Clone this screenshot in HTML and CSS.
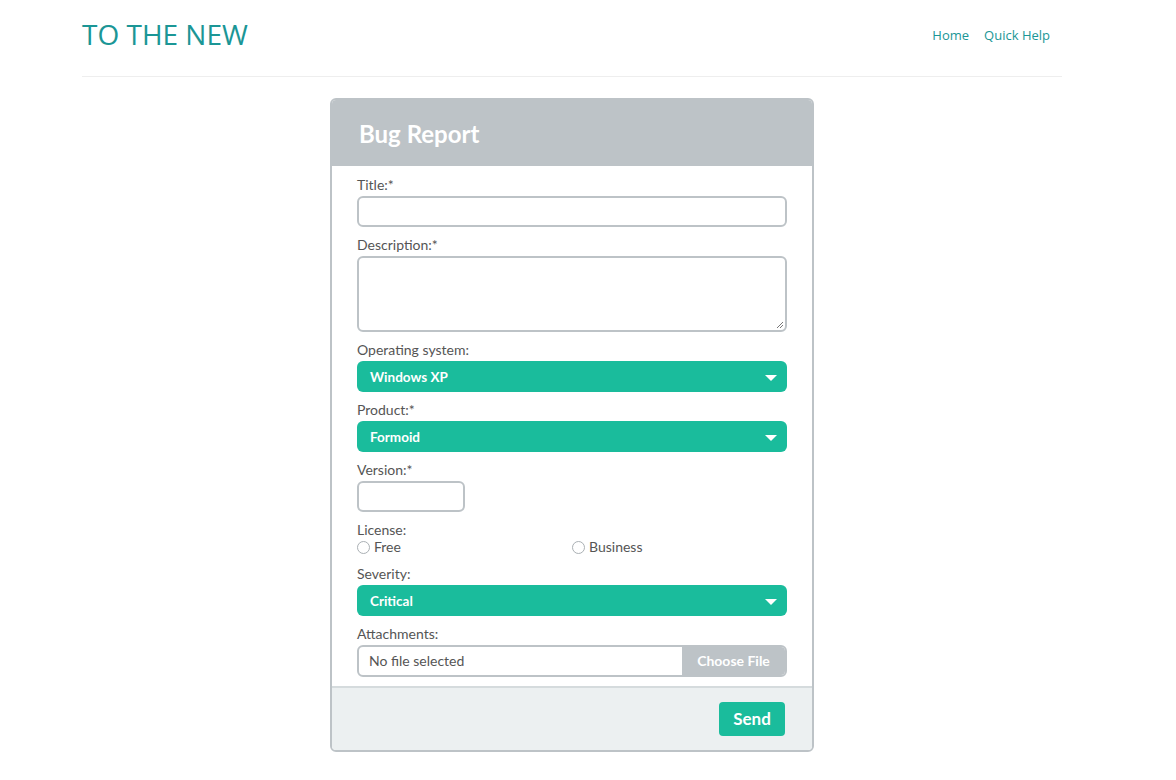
FILE: index.html
```html
<!DOCTYPE html>
<html>
<head>
<meta charset="utf-8">
<link rel="stylesheet" href="styles.css">
</head>
<body>
<div class="container">
  <header class="topbar">
    <div class="logo">TO THE NEW</div>
    <nav class="nav">
      <a href="#">Home</a>
      <a href="#">Quick Help</a>
    </nav>
  </header>
  <form class="card">
    <div class="card-head">Bug Report</div>
    <div class="card-body">
      <div class="field">
        <label>Title:*</label>
        <input class="text" type="text">
      </div>
      <div class="field">
        <label>Description:*</label>
        <div class="textarea"><svg class="grip" width="8" height="8" viewBox="0 0 8 8"><path d="M7 1L1 7M7 4L4 7" stroke="#777" stroke-width="1"/></svg></div>
      </div>
      <div class="field">
        <label>Operating system:</label>
        <div class="select">Windows XP<span class="caret"></span></div>
      </div>
      <div class="field">
        <label>Product:*</label>
        <div class="select">Formoid<span class="caret"></span></div>
      </div>
      <div class="field">
        <label>Version:*</label>
        <input class="text short" type="text">
      </div>
      <div class="field">
        <label>License:</label>
        <div class="radios">
          <span class="radio"><span class="dot"></span>Free</span>
          <span class="radio"><span class="dot"></span>Business</span>
        </div>
      </div>
      <div class="field">
        <label>Severity:</label>
        <div class="select">Critical<span class="caret"></span></div>
      </div>
      <div class="field last">
        <label>Attachments:</label>
        <div class="file">
          <span class="file-name">No file selected</span>
          <span class="file-btn">Choose File</span>
        </div>
      </div>
    </div>
    <div class="card-foot">
      <span class="send">Send</span>
    </div>
  </form>
</div>
</body>
</html>
```
FILE: styles.css
```css
* { box-sizing: border-box; }
body {
  margin: 0;
  background: #fff;
  font-family: Lato, "Open Sans", sans-serif;
}
.container {
  width: 980px;
  margin-left: 82px;
}
.topbar {
  display: flex;
  justify-content: space-between;
  align-items: flex-start;
  height: 77px;
  border-bottom: 1px solid #eeeeee;
}
.logo {
  font-family: "Open Sans", sans-serif;
  font-size: 28px;
  color: #1b9696;
  margin-top: 15px;
}
.nav {
  display: flex;
  gap: 15px;
  margin-top: 26px;
  margin-right: 12px;
}
.nav a {
  font-family: "Open Sans", sans-serif;
  font-size: 13px;
  color: #1b9696;
  text-decoration: none;
}
.card {
  display: block;
  width: 484px;
  margin: 21px auto 0;
  border: 2px solid #bdc3c7;
  border-radius: 6px;
  overflow: hidden;
}
.card-head {
  background: #bdc3c7;
  color: #fff;
  font-weight: 700;
  font-size: 24px;
  height: 68px;
  line-height: 72px;
  padding-left: 27px;
  margin-top: -2px;
}
.card-body {
  padding: 10px 25px 9px;
}
.field { margin-bottom: 9px; }
.field.last { margin-bottom: 0; }
label {
  display: block;
  font-size: 14px;
  line-height: 17px;
  color: #555;
  margin-bottom: 3px;
}
.text {
  display: block;
  width: 430px;
  height: 31px;
  border: 2px solid #bdc3c7;
  border-radius: 6px;
  background: #fff;
  margin: 0;
  outline: none;
}
.text.short { width: 108px; }
.textarea {
  position: relative;
  width: 430px;
  height: 76px;
  border: 2px solid #bdc3c7;
  border-radius: 6px;
}
.grip { position: absolute; right: 1px; bottom: 1px; }
.select {
  position: relative;
  height: 31px;
  background: #1abc9c;
  border-radius: 6px;
  color: #fff;
  font-weight: 700;
  font-size: 13.5px;
  line-height: 32px;
  padding-left: 13px;
}
.caret {
  position: absolute;
  right: 10px;
  top: 14px;
  width: 0;
  height: 0;
  border-left: 6px solid transparent;
  border-right: 6px solid transparent;
  border-top: 6px solid #fff;
}
.radios {
  display: grid;
  grid-template-columns: 215px 215px;
  font-size: 14px;
  color: #555;
  line-height: 18px;
  margin-top: -3px;
}
.radio { display: flex; align-items: center; }
.dot {
  width: 13px;
  height: 13px;
  border: 1px solid #aab0b4;
  border-radius: 50%;
  margin-right: 4px;
  background: #fff;
}
.file {
  display: flex;
  height: 32px;
  border: 2px solid #bdc3c7;
  border-radius: 6px;
  overflow: hidden;
  font-size: 14px;
}
.file-name {
  flex: 1;
  color: #555;
  padding-left: 10px;
  line-height: 28px;
}
.file-btn {
  width: 103px;
  background: #bdc3c7;
  color: #fff;
  font-weight: 700;
  text-align: center;
  line-height: 28px;
}
.card-foot {
  background: #ecf0f1;
  border-top: 2px solid #d5dbdd;
  height: 64px;
  display: flex;
  justify-content: flex-end;
  align-items: flex-start;
  padding: 14px 27px 0 0;
}
.send {
  background: #1abc9c;
  color: #fff;
  font-weight: 700;
  font-size: 17px;
  width: 66px;
  height: 34px;
  line-height: 34px;
  text-align: center;
  border-radius: 4px;
}
```
